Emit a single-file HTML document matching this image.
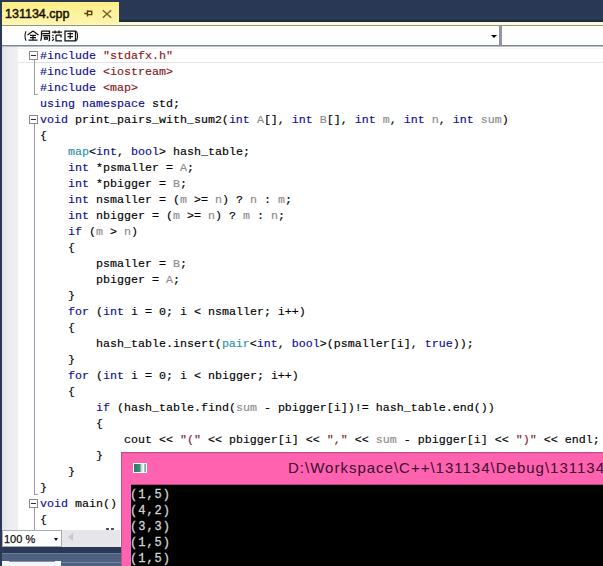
<!DOCTYPE html>
<html><head><meta charset="utf-8">
<style>
html,body{margin:0;padding:0;}
body{width:603px;height:566px;overflow:hidden;position:relative;background:#fff;font-family:"Liberation Sans",sans-serif;}
.a{position:absolute;}
#code{position:absolute;left:40px;top:48px;font-family:"Liberation Mono",monospace;font-size:11.6667px;line-height:16px;white-space:pre;color:#000;-webkit-text-stroke:0.15px currentColor;}
.k{color:#0c0c90;}
.s{color:#861818;}
.p{color:#8c8c8c;}
.t{color:#2b91af;}
#con{position:absolute;left:130px;top:487px;font-family:"Liberation Mono",monospace;font-size:12px;letter-spacing:1px;line-height:16px;white-space:pre;color:#d4d4d4;-webkit-text-stroke:0.3px #d4d4d4;}
</style></head><body>
<!-- top navy -->
<div class="a" style="left:0;top:0;width:603px;height:22px;background:#293955"></div>
<div class="a" style="left:0;top:17px;width:603px;height:2px;background:#2a3c62"></div>
<div class="a" style="left:0;top:19px;width:603px;height:2px;background:#25333f"></div>
<div class="a" style="left:0;top:21px;width:603px;height:1px;background:#1e2822"></div>
<!-- tab -->
<div class="a" style="left:2px;top:2px;width:117px;height:23px;background:linear-gradient(#ffec84,#fff19a 40%,#fff4ac 90%,#fdf6c4)"></div>
<div class="a" style="left:5px;top:6px;font-size:12.5px;line-height:17px;color:#141000;-webkit-text-stroke:0.45px #141000">131134.cpp</div>
<!-- pin -->
<svg class="a" style="left:83px;top:9px" width="12" height="10" viewBox="0 0 12 10">
<path d="M1.3 4.5H4.5M4.5 1.2V7.6M4.5 2.3H8.7V5.6H4.5" stroke="#4e4210" stroke-width="1.4" fill="none"/>
</svg>
<!-- close X -->
<svg class="a" style="left:101px;top:9px" width="12" height="10" viewBox="0 0 12 10">
<path d="M1.8 1.2L10.2 8.8M10.2 1.2L1.8 8.8" stroke="#74642c" stroke-width="1.45" fill="none"/>
</svg>
<!-- cream band under tabs -->
<div class="a" style="left:119px;top:22px;width:484px;height:3px;background:#f9f9e2"></div>
<div class="a" style="left:0;top:25px;width:603px;height:1px;background:#94967e"></div>
<!-- nav bar -->
<div class="a" style="left:0;top:26px;width:603px;height:19px;background:linear-gradient(#fdfef2,#fefefc 4px,#fdfdfe)"></div>
<div class="a" style="left:499px;top:26px;width:3px;height:19px;background:#8f96a8"></div>
<div class="a" style="left:491px;top:35px;width:0;height:0;border-left:3px solid transparent;border-right:3px solid transparent;border-top:3px solid #000"></div>
<svg class="a" style="left:23px;top:30px" width="56" height="12" viewBox="0 0 56 12">
<g stroke="#111" stroke-width="1.25" fill="none">
<path d="M3 1.2Q1 6 3 10.8" stroke-width="1.05"/>
<path d="M10 1L4.5 5M10 1L15.5 5M7 5.3H13M7 7.6H13M5.5 10H14.5M10 5.3V10"/>
<path d="M18.5 1.2H26.5V3.6H18.5M18.5 1.2V6Q18.5 9 17.5 10.8M19.8 5.6H26.5V10.3Q26.5 10.8 25.5 10.8M21.5 7.3H24.3V9.2H21.5Z"/>
<path d="M29 2H39M32 0.5V3.5M36 0.5V3.5M29.5 5L30.5 5.8M29.3 7.2L30.3 8M29.2 10.8L31 8.8M33 5H38V7.5M33 5V10.8H39"/>
<path d="M42 1.2H52.5V10.8H42ZM44.5 3.5H50M44.5 6.5H50M47.2 2.5V9"/>
<path d="M53.5 1.2Q55.5 6 53.5 10.8" stroke-width="1.05"/>
</g>
</svg>
<div class="a" style="left:0;top:45px;width:603px;height:1px;background:#7e8698"></div>
<div class="a" style="left:0;top:46px;width:603px;height:1px;background:#b8bec8"></div>
<!-- editor margin -->
<div class="a" style="left:2px;top:47px;width:16px;height:483px;background:linear-gradient(90deg,#dfe2e7,#e8eaee 30%,#eef0f2)"></div>
<!-- current line box -->
<div class="a" style="left:18px;top:48px;width:590px;height:13px;border-top:1px solid #f3f3f5;border-bottom:1px solid #e4e4e6"></div>
<!-- outline boxes & lines -->
<div class="a" style="left:29px;top:51px;width:7px;height:7px;border:1px solid #8a8a8a;background:#fff"></div>
<div class="a" style="left:31px;top:55px;width:5px;height:1px;background:#2a2a60"></div>
<div class="a" style="left:34px;top:60px;width:1px;height:35px;background:#9a9aa8"></div>
<div class="a" style="left:34px;top:94px;width:4px;height:1px;background:#9a9aa8"></div>
<div class="a" style="left:29px;top:115px;width:7px;height:7px;border:1px solid #8a8a8a;background:#fff"></div>
<div class="a" style="left:31px;top:119px;width:5px;height:1px;background:#2a2a60"></div>
<div class="a" style="left:34px;top:124px;width:1px;height:371px;background:#9a9aa8"></div>
<div class="a" style="left:34px;top:494px;width:4px;height:1px;background:#9a9aa8"></div>
<div class="a" style="left:29px;top:499px;width:7px;height:7px;border:1px solid #8a8a8a;background:#fff"></div>
<div class="a" style="left:31px;top:503px;width:5px;height:1px;background:#2a2a60"></div>
<div class="a" style="left:34px;top:508px;width:1px;height:22px;background:#9a9aa8"></div>
<!-- code -->
<div id="code"><span class="k">#include</span> <span class="s">"stdafx.h"</span>
<span class="k">#include</span> <span class="s">&lt;iostream&gt;</span>
<span class="k">#include</span> <span class="s">&lt;map&gt;</span>
<span class="k">using</span> <span class="k">namespace</span> std;
<span class="k">void</span> print_pairs_with_sum2(<span class="k">int</span> <span class="p">A</span>[], <span class="k">int</span> <span class="p">B</span>[], <span class="k">int</span> <span class="p">m</span>, <span class="k">int</span> <span class="p">n</span>, <span class="k">int</span> <span class="p">sum</span>)
{
    <span class="t">map</span>&lt;<span class="k">int</span>, <span class="k">bool</span>&gt; hash_table;
    <span class="k">int</span> *psmaller = <span class="p">A</span>;
    <span class="k">int</span> *pbigger = <span class="p">B</span>;
    <span class="k">int</span> nsmaller = (<span class="p">m</span> &gt;= <span class="p">n</span>) ? <span class="p">n</span> : <span class="p">m</span>;
    <span class="k">int</span> nbigger = (<span class="p">m</span> &gt;= <span class="p">n</span>) ? <span class="p">m</span> : <span class="p">n</span>;
    <span class="k">if</span> (<span class="p">m</span> &gt; <span class="p">n</span>)
    {
        psmaller = <span class="p">B</span>;
        pbigger = <span class="p">A</span>;
    }
    <span class="k">for</span> (<span class="k">int</span> i = 0; i &lt; nsmaller; i++)
    {
        hash_table.insert(<span class="t">pair</span>&lt;<span class="k">int</span>, <span class="k">bool</span>&gt;(psmaller[i], <span class="k">true</span>));
    }
    <span class="k">for</span> (<span class="k">int</span> i = 0; i &lt; nbigger; i++)
    {
        <span class="k">if</span> (hash_table.find(<span class="p">sum</span> - pbigger[i])!= hash_table.end())
        {
            cout &lt;&lt; <span class="s">"("</span> &lt;&lt; pbigger[i] &lt;&lt; <span class="s">","</span> &lt;&lt; <span class="p">sum</span> - pbigger[i] &lt;&lt; <span class="s">")"</span> &lt;&lt; endl;
        }
    }
}
<span class="k">void</span> main()
{
</div>
<!-- partial marks of next line -->
<div class="a" style="left:106px;top:528px;width:3px;height:2px;background:#555"></div>
<div class="a" style="left:111px;top:528px;width:3px;height:2px;background:#555"></div>
<!-- left navy strip -->
<div class="a" style="left:0;top:0;width:2px;height:566px;background:#293955"></div>
<!-- bottom bar: zoom combo + hscroll -->
<div class="a" style="left:2px;top:530px;width:118px;height:17px;background:#e6e6ea"></div>
<div class="a" style="left:2px;top:530px;width:58px;height:15px;border:1px solid #a8acb4;background:#fff"></div>
<div class="a" style="left:4px;top:533px;font-size:11px;line-height:13px;color:#111;-webkit-text-stroke:0.25px #111">100 %</div>
<div class="a" style="left:54px;top:538px;width:0;height:0;border-left:2.5px solid transparent;border-right:2.5px solid transparent;border-top:3px solid #111"></div>
<div class="a" style="left:68px;top:533px;width:0;height:0;border-top:4px solid transparent;border-bottom:4px solid transparent;border-right:5px solid #c8c8cc"></div>
<div class="a" style="left:0;top:547px;width:121px;height:6px;background:#293955"></div>
<div class="a" style="left:0;top:553px;width:121px;height:1px;background:#6a7c9c"></div>
<div class="a" style="left:0;top:554px;width:121px;height:12px;background:#4e6180"></div>
<div class="a" style="left:0;top:562px;width:121px;height:1px;background:#7082a0"></div>
<div class="a" style="left:2px;top:561px;width:59px;height:5px;background:#f4f6f8"></div>
<div class="a" style="left:9px;top:561px;width:46px;height:1px;background:#8890a4"></div>
<div class="a" style="left:0;top:0;width:2px;height:566px;background:#293955"></div>
<!-- console window -->
<div class="a" style="left:121px;top:452px;width:482px;height:114px;background:#ff63b0;border-top:1px solid #c0508a;border-left:1px solid #c0508a;box-sizing:border-box"></div>
<div class="a" style="left:122px;top:453px;width:481px;height:1px;background:#ee5ca4"></div>
<div class="a" style="left:131px;top:484px;width:472px;height:1px;background:#b04882"></div>
<div class="a" style="left:131px;top:485px;width:472px;height:81px;background:#000"></div>
<div class="a" style="left:133px;top:463px;width:14px;height:10px;background:#fff"></div>
<div class="a" style="left:134px;top:464px;width:12px;height:8px;background:linear-gradient(90deg,#2e7a66,#3f8c76 50%,#b0dcd0 58%,#e0f4ee 75%,#ffffff 80%,#ffffff 86%,#80b0a0 88%)"></div>
<div class="a" style="left:288px;top:459px;font-size:15px;letter-spacing:1px;line-height:18px;color:#3a0e2e;white-space:nowrap">D:\Workspace\C++\131134\Debug\131134</div>
<div id="con">(1,5)
(4,2)
(3,3)
(1,5)
(1,5)</div>
</body></html>
